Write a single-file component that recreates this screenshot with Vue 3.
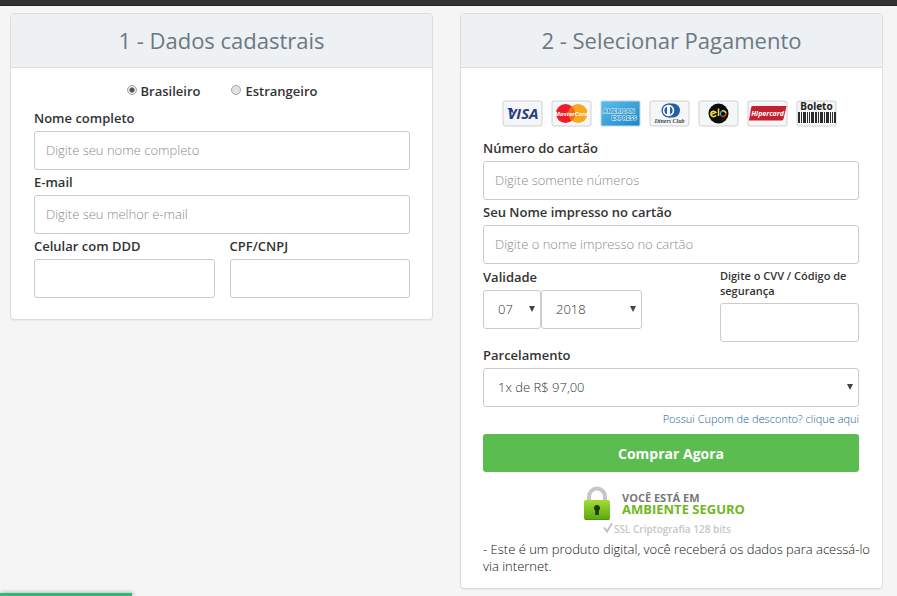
<script setup>
import { ref } from 'vue'

const nationality = ref('br')
const name = ref('')
const email = ref('')
const phone = ref('')
const doc = ref('')
const cardNumber = ref('')
const cardName = ref('')
const month = ref('07')
const year = ref('2018')
const cvv = ref('')
const plan = ref('1')

const months = Array.from({ length: 12 }, (_, i) => String(i + 1).padStart(2, '0'))
const years = Array.from({ length: 12 }, (_, i) => String(2018 + i))
</script>

<template>
  <div class="page">
    <div class="topbar"></div>
    <form class="columns" @submit.prevent>
      <section class="panel">
        <h2 class="panel-title">1 - Dados cadastrais</h2>
        <div class="panel-body">
          <div class="radios">
            <label class="radio"><input v-model="nationality" type="radio" name="nat" value="br" />Brasileiro</label>
            <label class="radio"><input v-model="nationality" type="radio" name="nat" value="ex" />Estrangeiro</label>
          </div>
          <div class="field">
            <label for="name">Nome completo</label>
            <input id="name" v-model="name" class="control" type="text" placeholder="Digite seu nome completo" />
          </div>
          <div class="field">
            <label for="email">E-mail</label>
            <input id="email" v-model="email" class="control" type="email" placeholder="Digite seu melhor e-mail" />
          </div>
          <div class="pair">
            <div class="field">
              <label for="phone">Celular com DDD</label>
              <input id="phone" v-model="phone" class="control" type="tel" />
            </div>
            <div class="field">
              <label for="doc">CPF/CNPJ</label>
              <input id="doc" v-model="doc" class="control" type="text" />
            </div>
          </div>
        </div>
      </section>

      <section class="panel">
        <h2 class="panel-title">2 - Selecionar Pagamento</h2>
        <div class="panel-body payment">
          <div class="cards">
            <svg class="card" viewBox="0 0 41 27" role="img" aria-label="Visa">
              <rect class="card-face" x="1" y="1" width="39" height="25" rx="2" />
              <text class="visa" x="21" y="19" text-anchor="middle">VISA</text>
              <path d="M5 8h5l2 6z" fill="#263d86" />
            </svg>
            <svg class="card" viewBox="0 0 41 27" role="img" aria-label="MasterCard">
              <rect class="card-face" x="1" y="1" width="39" height="25" rx="2" />
              <circle cx="14.500" cy="13.500" r="9.500" fill="#ee1c25" />
              <circle cx="27" cy="13.500" r="9.500" fill="#f7a81b" />
              <path d="M20.750 6.300a9.500 9.500 0 0 1 0 14.400a9.500 9.500 0 0 1 0-14.400z" fill="#f26a21" />
              <text class="master" x="20.500" y="16" text-anchor="middle">MasterCard</text>
            </svg>
            <svg class="card" viewBox="0 0 41 27" role="img" aria-label="American Express">
              <defs>
                <linearGradient id="amex" x1="0" y1="0" x2="1" y2="1">
                  <stop offset="0" stop-color="#5cc0ec" />
                  <stop offset="1" stop-color="#1c87c6" />
                </linearGradient>
              </defs>
              <rect x="1" y="1" width="39" height="25" rx="1" fill="url(#amex)" stroke="#c5d3da" />
              <text class="amex" x="19" y="13" text-anchor="middle">AMERICAN</text>
              <text class="amex" x="24" y="20" text-anchor="middle">EXPRESS</text>
            </svg>
            <svg class="card" viewBox="0 0 41 27" role="img" aria-label="Diners Club">
              <rect class="card-face" x="1" y="1" width="39" height="25" rx="2" />
              <path d="M19 3.500h5a7 7 0 0 1 0 14h-5z" fill="#2460a7" />
              <circle cx="19.500" cy="10.500" r="7" fill="#2460a7" />
              <circle cx="19.500" cy="10.500" r="5.700" fill="#fff" />
              <path d="M18 6.500a4.300 4.300 0 0 0 0 8zM21 6.500a4.300 4.300 0 0 1 0 8z" fill="#2460a7" />
              <text class="diners" x="20.500" y="23" text-anchor="middle">Diners Club</text>
            </svg>
            <svg class="card" viewBox="0 0 41 27" role="img" aria-label="Elo">
              <rect class="card-face" x="1" y="1" width="39" height="25" rx="2" />
              <circle cx="20.500" cy="13.500" r="10" fill="#0c0c0c" />
              <g fill="none" stroke-width="1.600">
                <path d="M12.800 14.600l5-2.200a2.700 2.700 0 1 0 .2 2.600" stroke="#e5dc3c" />
                <path d="M20.500 8.500v7.500" stroke="#e5dc3c" />
                <path d="M23 15.500a3 3 0 0 1 1-4.400" stroke="#3a9fd0" />
                <path d="M24 11a3 3 0 0 1 4 2.500" stroke="#efd52b" />
                <path d="M28 13.500a3 3 0 0 1-4.800 2.300" stroke="#dd3b2a" />
              </g>
            </svg>
            <svg class="card" viewBox="0 0 41 27" role="img" aria-label="Hipercard">
              <rect class="card-face" x="1" y="1" width="39" height="25" rx="2" />
              <path d="M5.500 6h34l-3 13q-.5 1.500-2.500 1.500H2L4 8q.4-2 1.500-2z" fill="#c5202d" />
              <text class="hiper" x="20.500" y="16" text-anchor="middle">Hipercard</text>
            </svg>
            <svg class="card" viewBox="0 0 41 27" role="img" aria-label="Boleto">
              <rect class="card-face" x="1" y="1" width="39" height="25" rx="2" />
              <text class="boleto" x="20.500" y="10" text-anchor="middle">Boleto</text>
              <path
                d="M2 12h2v11h-2zM5 12h1v11h-1zM7 12h3v11h-3zM11 12h1v11h-1zM13 12h1v11h-1zM15 12h3v11h-3zM19 12h2v11h-2zM22 12h1v11h-1zM24 12h3v11h-3zM28 12h1v11h-1zM30 12h3v11h-3zM34 12h1v11h-1zM36 12h1v11h-1zM38 12h2v11h-2z"
                fill="#2b2b2b"
              />
            </svg>
          </div>
          <div class="field">
            <label for="card-number">Número do cartão</label>
            <input id="card-number" v-model="cardNumber" class="control" type="text" placeholder="Digite somente números" />
          </div>
          <div class="field">
            <label for="card-name">Seu Nome impresso no cartão</label>
            <input id="card-name" v-model="cardName" class="control" type="text" placeholder="Digite o nome impresso no cartão" />
          </div>
          <div class="card-row">
            <div class="field">
              <label for="month">Validade</label>
              <div class="dates">
                <span class="select month">
                  <select id="month" v-model="month" class="control">
                    <option v-for="m in months" :key="m">{{ m }}</option>
                  </select>
                </span>
                <span class="select year">
                  <select v-model="year" class="control" aria-label="Ano">
                    <option v-for="y in years" :key="y">{{ y }}</option>
                  </select>
                </span>
              </div>
            </div>
            <div class="field cvv">
              <label for="cvv">Digite o CVV / Código de segurança</label>
              <input id="cvv" v-model="cvv" class="control" type="text" />
            </div>
          </div>
          <div class="field">
            <label for="plan">Parcelamento</label>
            <span class="select">
              <select id="plan" v-model="plan" class="control">
                <option value="1">1x de R$ 97,00</option>
              </select>
            </span>
          </div>
          <a class="coupon" href="#">Possui Cupom de desconto? clique aqui</a>
          <button class="buy" type="submit">Comprar Agora</button>
          <svg class="secure" viewBox="0 0 176 52" role="img" aria-label="Ambiente seguro">
            <defs>
              <linearGradient id="lock" x1="0" y1="0" x2="0" y2="1">
                <stop offset="0" stop-color="#a4dc35" />
                <stop offset="1" stop-color="#57a80c" />
              </linearGradient>
            </defs>
            <path d="M6 18v-6.500a8 8 0 0 1 16 0v6.500" fill="none" stroke="#c4c6c8" stroke-width="4" />
            <rect x="1" y="15" width="26" height="20" rx="2" fill="url(#lock)" />
            <path d="M2 34.500h24" stroke="#4b940c" />
            <path d="M14 20a3 3 0 0 1 1.800 5.400v4.600h-3.600v-4.600a3 3 0 0 1 1.800-5.400z" fill="#1d3a08" />
            <text class="secure-top" x="39" y="17">VOCÊ ESTÁ EM</text>
            <text class="secure-main" x="39" y="29">AMBIENTE SEGURO</text>
            <path d="M21 42.500l3 4l5-8" fill="none" stroke="#c0c0c4" stroke-width="2" />
            <text class="secure-ssl" x="31" y="48">SSL Criptografia 128 bits</text>
          </svg>
          <p class="note">- Este é um produto digital, você receberá os dados para acessá-lo via internet.</p>
        </div>
      </section>
    </form>
    <div class="widget"></div>
  </div>
</template>

<style>
body {
  background: #f5f5f5;
}
</style>

<style scoped>
.page {
  font-family: "Open Sans", "Noto Sans", sans-serif;
  font-size: 13px;
  font-weight: 300;
  line-height: 19px;
  color: #333;
}
.topbar {
  height: 5px;
  background: #333;
  border-bottom: 1px solid #272024;
}
.columns {
  display: grid;
  grid-template-columns: 1fr 1fr;
  align-items: start;
  gap: 27px;
  padding: 7px 14px 7px 10px;
}
.panel {
  background: #fff;
  border: 1px solid #ddd;
  border-radius: 4px;
  box-shadow: 0 1px 1px rgba(0, 0, 0, 0.05);
}
.panel-title {
  margin: 0;
  padding: 11px 15px;
  border-bottom: 1px solid #ddd;
  border-radius: 3px 3px 0 0;
  background: #edf1f4;
  color: #6c7883;
  font-size: 22px;
  font-weight: 400;
  line-height: 31px;
  text-align: center;
}
.panel-body {
  padding: 13px 22px 21px 23px;
}
.payment {
  display: flex;
  flex-direction: column;
  padding: 32px 23px 13px 22px;
}
.radios {
  display: flex;
  justify-content: center;
  gap: 31px;
  margin-bottom: 5px;
  line-height: 20px;
}
.radio {
  display: flex;
  align-items: center;
  gap: 4px;
  font-weight: 600;
}
.radio input {
  appearance: none;
  width: 10px;
  height: 10px;
  margin: 0 0 2px;
  border: 1px solid #a5a5a5;
  border-radius: 50%;
  background: #e2e2e2;
}
.radio input:checked {
  background: radial-gradient(circle, #555 0 2px, #e6e6e6 3px);
}
.field > label {
  display: block;
  padding: 3px 0;
  font-weight: 600;
}
.pair {
  display: grid;
  grid-template-columns: 1fr 1fr;
  gap: 15px;
}
.control {
  display: block;
  box-sizing: border-box;
  width: 100%;
  height: 39px;
  margin: 0;
  padding: 0 11px 2px;
  border: 1px solid #ccc;
  border-radius: 3px;
  background: #fff;
  color: #555;
  font: inherit;
  outline: none;
}
.control::placeholder {
  color: #8c8c8c;
  opacity: 1;
}
.select {
  position: relative;
  display: block;
}
.select .control {
  appearance: none;
  padding: 0 14px;
  color: #333;
}
.select::after {
  content: "";
  position: absolute;
  top: 16px;
  right: 6px;
  width: 6px;
  height: 6px;
  background: #444;
  clip-path: polygon(0 0, 100% 0, 50% 100%);
  pointer-events: none;
}
.cards {
  display: flex;
  align-self: center;
  gap: 8px;
  margin-bottom: 9px;
  padding-right: 4px;
}
.card {
  width: 41px;
  height: 27px;
}
.card-face {
  fill: #f5f6f7;
  stroke: #d0d0d2;
}
.visa {
  font: italic 700 15px "Open Sans", sans-serif;
  fill: #263d86;
}
.master {
  font: italic 700 6px "Open Sans", sans-serif;
  fill: #fff;
}
.amex {
  font: 700 6px "Open Sans", sans-serif;
  fill: #2089c8;
  stroke: #e2f3fc;
  stroke-width: 1px;
  paint-order: stroke;
}
.diners {
  font: italic 700 6px "Liberation Serif", serif;
  fill: #444;
}
.hiper {
  font: italic 700 7px "Open Sans", sans-serif;
  fill: #fff;
}
.boleto {
  font: 700 10px "Noto Sans", sans-serif;
  fill: #222;
}
.card-row {
  display: grid;
  grid-template-columns: 1fr 37%;
  margin: 1px 0;
}
.dates {
  display: flex;
}
.month {
  width: 58px;
}
.year {
  width: 101px;
}
.cvv > label {
  padding: 3px 0 5px;
  font-size: 11px;
  line-height: 15px;
}
.coupon {
  align-self: flex-end;
  margin: 3px 0 6px;
  color: #22629b;
  font-size: 11px;
  line-height: 18px;
  text-decoration: none;
}
.buy {
  height: 38px;
  border: 0;
  border-radius: 3px;
  background: #5bbc4f;
  color: #fff;
  font: 700 14px "Open Sans", sans-serif;
}
.secure {
  align-self: center;
  width: 176px;
  height: 52px;
  margin: 13px 0 4px;
}
.secure-top {
  font: 700 11px "Open Sans", sans-serif;
  fill: #77787b;
}
.secure-main {
  font: 700 13px "Open Sans", sans-serif;
  fill: #6fb81d;
}
.secure-ssl {
  font: 600 10px "Open Sans", sans-serif;
  fill: #c6c6ca;
}
.note {
  margin: 0 -16px 0 0;
  color: #111;
  line-height: 17px;
}
.widget {
  position: fixed;
  bottom: 0;
  left: 0;
  width: 132px;
  height: 3px;
  background: #2db87e;
  box-shadow: 1px 0 4px rgba(0, 0, 0, 0.4);
}
</style>
